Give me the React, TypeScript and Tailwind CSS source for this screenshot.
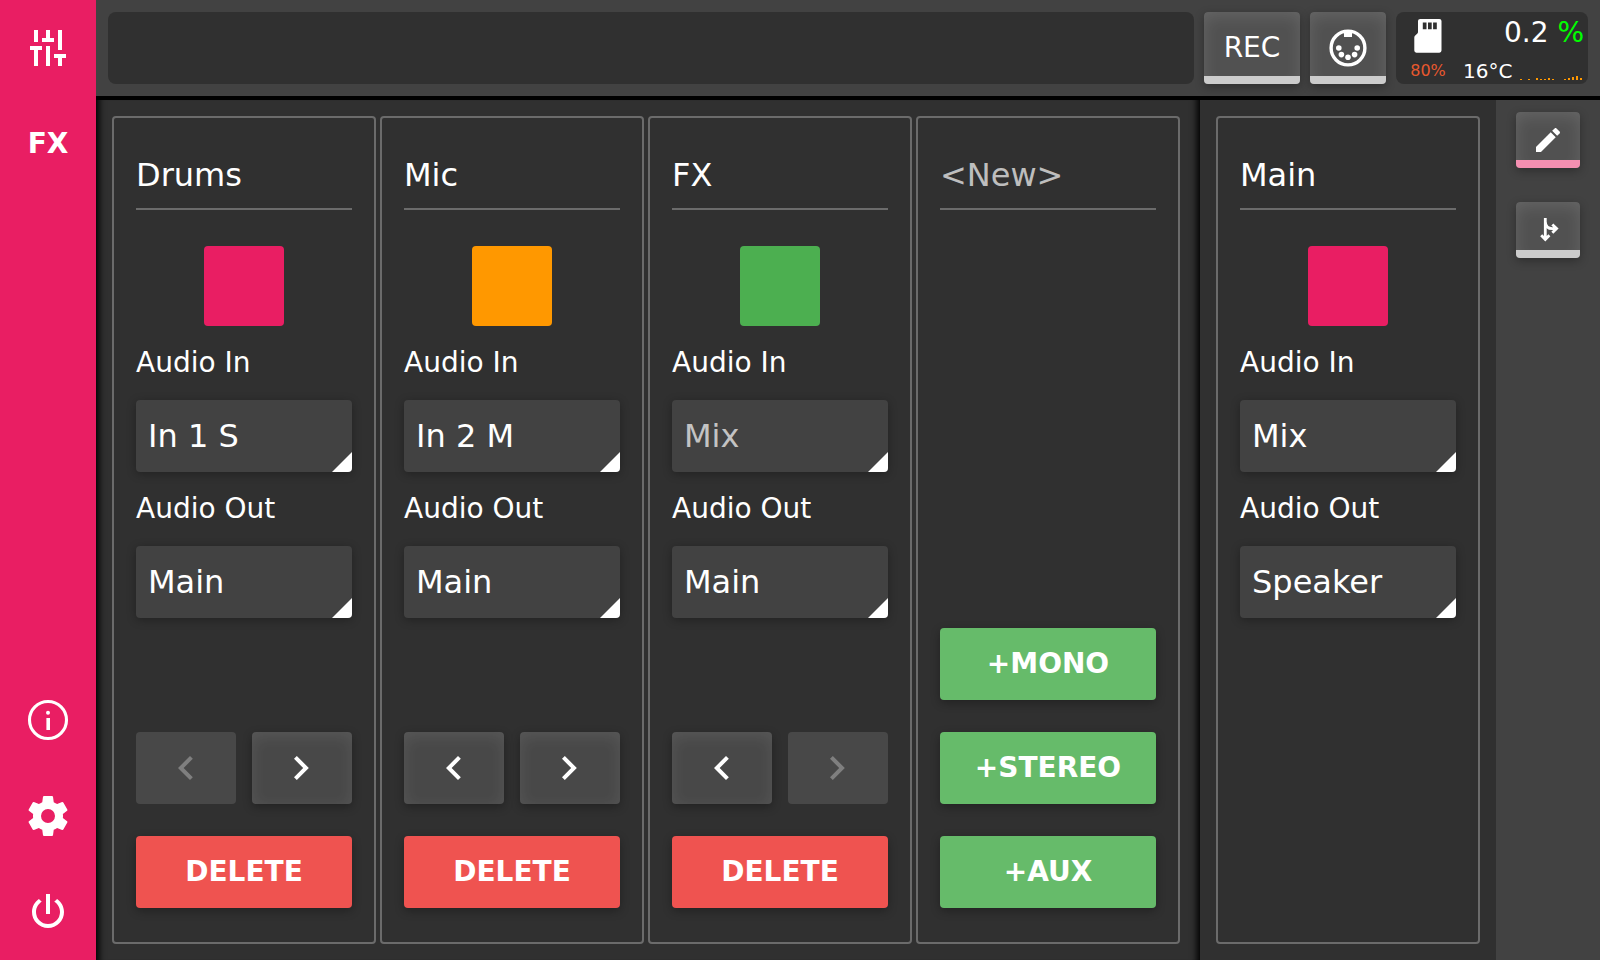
import React from 'react';
import clsx from 'clsx';

type Track = {
  name: string;
  color?: string;
  audioIn?: string;
  audioInDisabled?: boolean;
  audioOut?: string;
  canLeft?: boolean;
  canRight?: boolean;
};

const tracks: Track[] = [
  { name: 'Drums', color: 'bg-[#e91e63]', audioIn: 'In 1 S', audioOut: 'Main', canRight: true },
  { name: 'Mic', color: 'bg-[#ff9800]', audioIn: 'In 2 M', audioOut: 'Main', canLeft: true, canRight: true },
  { name: 'FX', color: 'bg-[#4caf50]', audioIn: 'Mix', audioInDisabled: true, audioOut: 'Main', canLeft: true },
];

const cpuHistory = [1, 0, 1, 0, 2, 1, 1, 2, 1, 0, 0, 1, 2, 3, 4, 2];

const icons = {
  mixer:
    'M5 3h2v6H5zM3 11h6v2H7v8H5v-8H3zM11 3h2v4h2v2H9V7h2zM11 11h2v10h-2zM17 3h2v10h-2zM15 15h6v2h-2v4h-2v-4h-2z',
  cog: 'M12,15.5A3.5,3.5 0 0,1 8.5,12A3.5,3.5 0 0,1 12,8.5A3.5,3.5 0 0,1 15.5,12A3.5,3.5 0 0,1 12,15.5M19.43,12.97C19.47,12.65 19.5,12.33 19.5,12C19.5,11.67 19.47,11.34 19.43,11L21.54,9.37C21.73,9.22 21.78,8.95 21.66,8.73L19.66,5.27C19.54,5.05 19.27,4.96 19.05,5.05L16.56,6.05C16.04,5.66 15.5,5.32 14.87,5.07L14.5,2.42C14.46,2.18 14.25,2 14,2H10C9.75,2 9.54,2.18 9.5,2.42L9.13,5.07C8.5,5.32 7.96,5.66 7.44,6.05L4.95,5.05C4.73,4.96 4.46,5.05 4.34,5.27L2.34,8.73C2.21,8.95 2.27,9.22 2.46,9.37L4.57,11C4.53,11.34 4.5,11.67 4.5,12C4.5,12.33 4.53,12.65 4.57,12.97L2.46,14.63C2.27,14.78 2.21,15.05 2.34,15.27L4.34,18.73C4.46,18.95 4.73,19.03 4.95,18.95L7.44,17.94C7.96,18.34 8.5,18.68 9.13,18.93L9.5,21.58C9.54,21.82 9.75,22 10,22H14C14.25,22 14.46,21.82 14.5,21.58L14.87,18.93C15.5,18.67 16.04,18.34 16.56,17.94L19.05,18.95C19.27,19.03 19.54,18.95 19.66,18.73L21.66,15.27C21.78,15.05 21.73,14.78 21.54,14.63L19.43,12.97Z',
  power:
    'M16.56,5.44L15.11,6.89C16.84,7.94 18,9.83 18,12A6,6 0 0,1 12,18A6,6 0 0,1 6,12C6,9.83 7.16,7.94 8.88,6.88L7.44,5.44C5.36,6.88 4,9.28 4,12A8,8 0 0,0 12,20A8,8 0 0,0 20,12C20,9.28 18.64,6.88 16.56,5.44M13,3H11V13H13',
  pencil:
    'M20.71,7.04C21.1,6.65 21.1,6 20.71,5.63L18.37,3.29C18,2.9 17.35,2.9 16.96,3.29L15.12,5.12L18.87,8.87M3,17.25V21H6.75L17.81,9.93L14.06,6.18L3,17.25Z',
  left: 'M15.41,16.58L10.83,12L15.41,7.41L14,6L8,12L14,18L15.41,16.58Z',
  right: 'M8,16.58L12.58,12L8,7.41L9.41,6L15.41,12L9.41,18L8,16.58Z',
};

const Icon: React.FC<{ d: string; size?: number }> = ({ d, size = 48 }) => (
  <svg width={size} height={size} viewBox="0 0 24 24" fill="currentColor">
    <path d={d} />
  </svg>
);

const InfoIcon = () => (
  <svg width="48" height="48" viewBox="0 0 48 48" fill="none">
    <circle cx="24" cy="24" r="18.5" stroke="currentColor" strokeWidth="3.1" />
    <circle cx="24" cy="16.7" r="2" fill="currentColor" />
    <rect x="22.4" y="22" width="3.6" height="12" fill="currentColor" />
  </svg>
);

const MidiIcon = () => (
  <svg width="40" height="40" viewBox="-20 -20 40 40" fill="currentColor">
    <circle r="16.9" fill="none" stroke="currentColor" strokeWidth="3.4" />
    <path d="M-4 -17.5h8v6.5h-8z" />
    <circle cx="-9.2" cy="0" r="2.8" />
    <circle cx="9.2" cy="0" r="2.8" />
    <circle cx="-6.6" cy="6.6" r="2.8" />
    <circle cx="6.6" cy="6.6" r="2.8" />
    <circle cx="0" cy="9.3" r="2.8" />
  </svg>
);

const SdIcon = () => (
  <svg width="28" height="34" viewBox="0 0 28 34">
    <path
      d="M6.2 0H25.4Q27.5 0 27.5 2V31.6Q27.5 33.7 25.4 33.7H2.4Q.3 33.7 .3 31.6V18.4Q.3 17.4 1 16.8L3.4 14.4Q4 13.8 4 13V2Q4 0 6.2 0Z"
      fill="#fff"
    />
    <path d="M8.8 3.6h3.7v6.6H8.8zM14 3.6h3.7v6.6H14zM19.1 3.6h3.7v6.6h-3.7z" fill="#303030" />
  </svg>
);

const RouteIcon = () => (
  <svg width="32" height="32" viewBox="0 0 32 32" fill="none" stroke="currentColor" strokeWidth="2.8">
    <path d="M13.3 4v21M9.2 21.2l4.1 4.2 4.1-4.2" />
    <path d="M13.3 8.5c.4 4 3 6.1 7 6.1h4M20.3 10.4l4.3 4.2-4.3 4.2" />
  </svg>
);

const SideItem: React.FC<{ children: React.ReactNode }> = ({ children }) => (
  <button className="flex h-24 w-24 items-center justify-center text-[28px] font-bold">{children}</button>
);

const BarButton: React.FC<{ className?: string; active?: boolean; children: React.ReactNode }> = ({
  className,
  active,
  children,
}) => (
  <button
    className={clsx(
      'flex flex-col overflow-hidden rounded bg-[#515151] shadow-[0_3px_10px_rgba(0,0,0,0.3)]',
      className,
    )}
  >
    <span className="-mb-2 flex w-full flex-1 items-center justify-center rounded shadow-[inset_0_4px_16px_rgba(255,255,255,0.12)]">
      {children}
    </span>
    <span className={clsx('h-2 w-full', active ? 'bg-[#f48fb1]' : 'bg-[#cccccc]')} />
  </button>
);

const Select: React.FC<{ label: string; value?: string; disabled?: boolean; className?: string }> = ({
  label,
  value,
  disabled,
  className,
}) => (
  <div className={className}>
    <div className="h-[58px] text-[28px] leading-[42px]">{label}</div>
    <div className="relative flex h-[72px] items-center rounded bg-[#424242] px-3 text-[32px] shadow-[0_2px_10px_rgba(0,0,0,0.3)]">
      <span className={clsx(disabled && 'text-white/70')}>{value}</span>
      <svg className="absolute right-0 bottom-0 rounded-br" width="20" height="20" viewBox="0 0 20 20">
        <path d="M20 0V20H0z" fill="#fff" />
      </svg>
    </div>
  </div>
);

const MoveButton: React.FC<{ d: string; enabled?: boolean }> = ({ d, enabled }) => (
  <button
    className={clsx(
      'flex h-[72px] flex-1 items-center justify-center rounded bg-[#484848]',
      enabled
        ? 'shadow-[0_3px_10px_rgba(0,0,0,0.3),inset_0_4px_16px_rgba(255,255,255,0.09)]'
        : 'text-white/30',
    )}
  >
    <Icon d={d} />
  </button>
);

const ActionButton: React.FC<{ className: string; children: React.ReactNode }> = ({ className, children }) => (
  <button
    className={clsx('h-[72px] w-full rounded text-[28px] font-bold shadow-[0_3px_10px_rgba(0,0,0,0.3)]', className)}
  >
    {children}
  </button>
);

const Strip: React.FC<{ name: string; dim?: boolean; children?: React.ReactNode }> = ({ name, dim, children }) => (
  <div className="flex h-[828px] w-[264px] flex-col rounded border-2 border-[#6b6b6b] px-[22px] pt-[26px] pb-[34px]">
    <div
      className={clsx(
        'h-[66px] shrink-0 border-b-2 border-[#6b6b6b] text-[32px] leading-[62px]',
        dim && 'text-white/70',
      )}
    >
      {name}
    </div>
    {children}
  </div>
);

const TrackSettings: React.FC<{ track: Track }> = ({ track }) => (
  <>
    <div className={clsx('mt-9 h-20 w-20 shrink-0 self-center rounded', track.color)} />
    <Select className="mt-4" label="Audio In" value={track.audioIn} disabled={track.audioInDisabled} />
    <Select className="mt-4" label="Audio Out" value={track.audioOut} />
  </>
);

export default function App() {
  return (
    <div className="flex h-[960px] w-[1600px] overflow-hidden bg-[#303030] font-['DejaVu_Sans',sans-serif] text-white">
      <nav className="flex w-24 shrink-0 flex-col bg-[#e91e63]">
        <SideItem>
          <Icon d={icons.mixer} />
        </SideItem>
        <SideItem>FX</SideItem>
        <div className="flex-1" />
        <SideItem>
          <InfoIcon />
        </SideItem>
        <SideItem>
          <Icon d={icons.cog} />
        </SideItem>
        <SideItem>
          <Icon d={icons.power} />
        </SideItem>
      </nav>

      <div className="flex flex-1 flex-col">
        <header className="flex h-[100px] shrink-0 gap-2.5 border-b-4 border-black bg-[#424242] p-3">
          <div className="flex-1 rounded-lg bg-[#303030]" />
          <BarButton className="w-24 text-[28px]">REC</BarButton>
          <BarButton className="w-[76px]">
            <MidiIcon />
          </BarButton>
          <div className="flex w-48 rounded-lg bg-[#303030]">
            <div className="flex w-16 flex-col items-center pt-[7px]">
              <SdIcon />
              <span className="mt-1.5 text-base leading-6 text-[#ff5e2e]/90">80%</span>
            </div>
            <div className="flex flex-1 flex-col">
              <div className="h-10 pr-1 text-right text-[28px] leading-[42px]">
                0.2 <span className="text-[#00ff00]">%</span>
              </div>
              <div className="flex h-7 items-end justify-between pr-1.5 pl-[3px]">
                <span className="text-xl leading-[18px]">16°C</span>
                <div className="flex items-end gap-0.5">
                  {cpuHistory.map((v, i) => (
                    <div key={i} className="w-0.5 bg-[#ff9800]" style={{ height: v }} />
                  ))}
                </div>
              </div>
            </div>
          </div>
        </header>

        <div className="flex flex-1">
          <main className="flex w-[1104px] gap-1 p-4 shadow-[inset_11px_0_7px_-8px_#000,inset_-11px_0_7px_-8px_#000]">
            {tracks.map((track) => (
              <Strip key={track.name} name={track.name}>
                <TrackSettings track={track} />
                <div className="mt-auto flex gap-4">
                  <MoveButton d={icons.left} enabled={track.canLeft} />
                  <MoveButton d={icons.right} enabled={track.canRight} />
                </div>
                <div className="mt-8">
                  <ActionButton className="bg-[#ef5350]">DELETE</ActionButton>
                </div>
              </Strip>
            ))}
            <Strip name="<New>" dim>
              <div className="mt-auto flex flex-col gap-8">
                <ActionButton className="bg-[#66bb6a]">+MONO</ActionButton>
                <ActionButton className="bg-[#66bb6a]">+STEREO</ActionButton>
                <ActionButton className="bg-[#66bb6a]">+AUX</ActionButton>
              </div>
            </Strip>
          </main>

          <section className="w-[296px] p-4">
            <Strip name="Main">
              <TrackSettings
                track={{ name: 'Main', color: 'bg-[#e91e63]', audioIn: 'Mix', audioOut: 'Speaker' }}
              />
            </Strip>
          </section>

          <aside className="flex w-[104px] flex-col items-center gap-[34px] bg-[#424242] pt-3">
            <BarButton className="h-14 w-16" active>
              <Icon d={icons.pencil} size={32} />
            </BarButton>
            <BarButton className="h-14 w-16">
              <RouteIcon />
            </BarButton>
          </aside>
        </div>
      </div>
    </div>
  );
}
